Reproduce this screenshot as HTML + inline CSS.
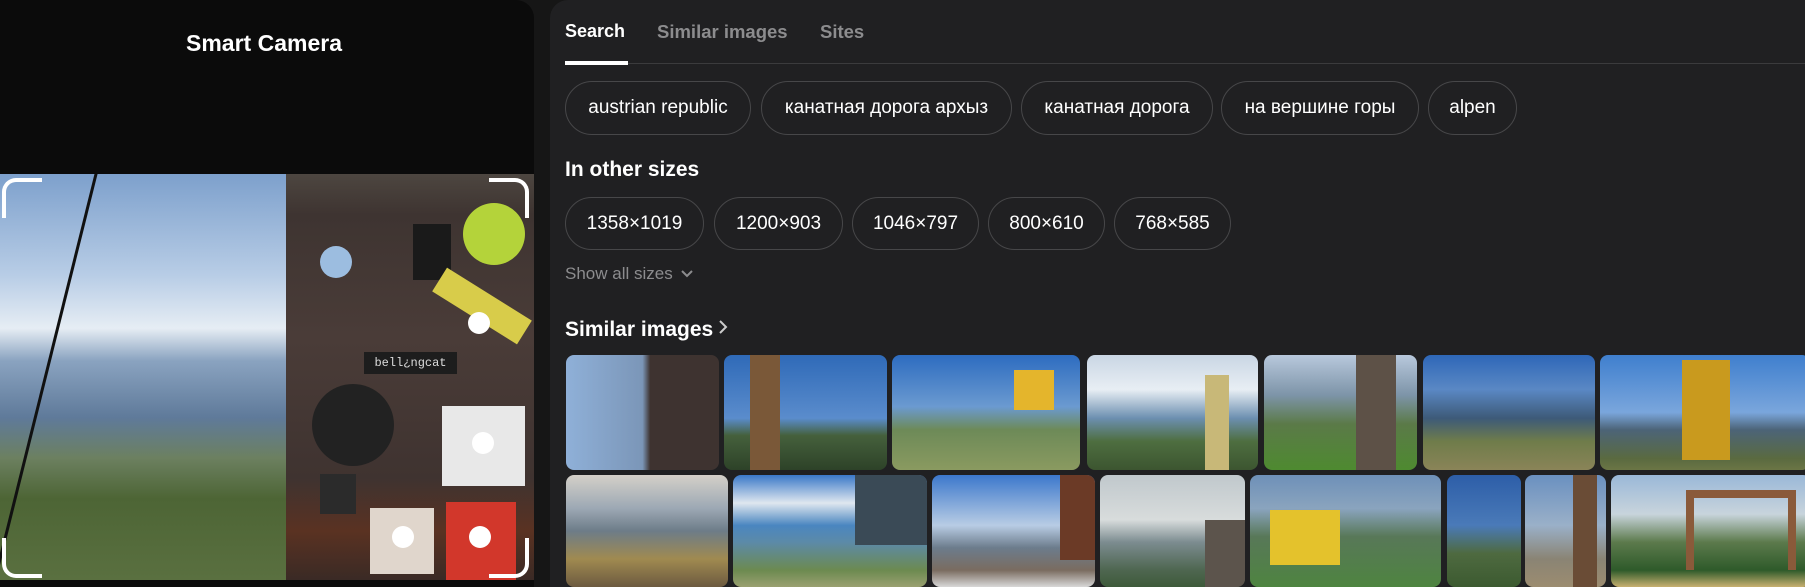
<!DOCTYPE html>
<html><head><meta charset="utf-8"><style>
*{margin:0;padding:0;box-sizing:border-box}
body{width:1805px;height:587px;background:#161616;font-family:"Liberation Sans","Noto Sans CJK SC",sans-serif;position:relative;overflow:hidden;color:#fff}
.a{position:absolute}
#left{left:0;top:0;width:534px;height:587px;background:#0b0b0b;border-radius:0 18px 0 0;overflow:hidden}
#right{left:550px;top:0;width:1255px;height:587px;background:#202022;border-radius:18px 0 0 0}
.chip{position:absolute;border:1px solid #474749;border-radius:28px;font-size:19px;color:#fff;display:flex;align-items:center;justify-content:center}
.br{position:absolute;width:40px;height:40px;border-color:#fff;border-style:solid}
.dot{position:absolute;width:22px;height:22px;border-radius:50%;background:#fff}
.im{position:absolute;border-radius:8px;overflow:hidden}
</style></head><body>
<div id="left" class="a">
<div class="a" style="left:0;top:30px;width:528px;text-align:center;font-size:23px;font-weight:bold">Smart Camera</div>
<div class="a" style="left:0;top:174px;width:534px;height:406px;overflow:hidden;background:linear-gradient(180deg,#7da0cc 0%,#b8cde6 25%,#e6edf4 38%,#8aa3c0 46%,#5f7a9a 60%,#6c8060 70%,#4d6535 80%,#5a7040 100%)">
 <div class="a" style="left:286px;top:0;width:248px;height:406px;background:linear-gradient(180deg,#4d4640 0%,#3e3431 10%,#4a3c38 40%,#3f3330 75%,#5a3222 88%,#3a2a25 100%)"></div>
 <div class="a" style="left:320px;top:300px;width:36px;height:40px;background:#2b2b2b"></div>
 <div class="a" style="left:463px;top:29px;width:62px;height:62px;border-radius:50%;background:#b4d33a"></div>
 <div class="a" style="left:413px;top:50px;width:38px;height:56px;background:#1a1a1a"></div>
 <div class="a" style="left:320px;top:72px;width:32px;height:32px;border-radius:50%;background:#9cbde0"></div>
 <div class="a" style="left:364px;top:178px;width:93px;height:22px;background:#1d1d1d;font-family:'Liberation Mono',monospace;font-size:12px;color:#ddd;text-align:center;line-height:22px">bell¿ngcat</div>
 <div class="a" style="left:312px;top:210px;width:82px;height:82px;border-radius:50%;background:#222"></div>
 <div class="a" style="left:442px;top:232px;width:83px;height:80px;background:#e8e8e8"></div>
 <div class="a" style="left:446px;top:328px;width:70px;height:78px;background:#d2372b"></div>
 <div class="a" style="left:370px;top:334px;width:64px;height:66px;background:#e0d6cc"></div>
 <div class="a" style="left:432px;top:118px;width:100px;height:28px;background:#d8cc4a;transform:rotate(32deg)"></div>
 <div class="a" style="left:97px;top:-10px;width:3px;height:430px;background:#111;transform:rotate(14deg);transform-origin:top"></div>
</div>
<div class="br" style="left:2px;top:178px;border-width:4px 0 0 4px;border-radius:14px 0 0 0"></div>
<div class="br" style="left:489px;top:178px;border-width:4px 4px 0 0;border-radius:0 14px 0 0"></div>
<div class="br" style="left:2px;top:538px;border-width:0 0 4px 4px;border-radius:0 0 0 14px"></div>
<div class="br" style="left:489px;top:538px;border-width:0 4px 4px 0;border-radius:0 0 14px 0"></div>
<div class="dot" style="left:468px;top:312px"></div>
<div class="dot" style="left:472px;top:432px"></div>
<div class="dot" style="left:392px;top:526px"></div>
<div class="dot" style="left:469px;top:526px"></div>
</div>
<div id="right" class="a"></div>
<div class="a" style="left:565px;top:21px;font-size:18px;font-weight:bold">Search</div>
<div class="a" style="left:657px;top:21px;font-size:18.5px;font-weight:bold;color:#8c8c8e">Similar images</div>
<div class="a" style="left:820px;top:21px;font-size:18.5px;font-weight:bold;color:#8c8c8e">Sites</div>
<div class="a" style="left:565px;top:63px;width:1240px;height:1px;background:#3b3b3d"></div>
<div class="a" style="left:565px;top:61px;width:63px;height:4px;background:#fff"></div>
<div class="chip" style="left:565px;top:81px;width:186px;height:54px">austrian republic</div>
<div class="chip" style="left:761px;top:81px;width:251px;height:54px">канатная дорога архыз</div>
<div class="chip" style="left:1021px;top:81px;width:192px;height:54px">канатная дорога</div>
<div class="chip" style="left:1221px;top:81px;width:198px;height:54px">на вершине горы</div>
<div class="chip" style="left:1428px;top:81px;width:89px;height:54px">alpen</div>
<div class="a" style="left:565px;top:158px;font-size:21px;font-weight:bold">In other sizes</div>
<div class="chip" style="left:565px;top:197px;width:139px;height:53px">1358×1019</div>
<div class="chip" style="left:714px;top:197px;width:129px;height:53px">1200×903</div>
<div class="chip" style="left:852px;top:197px;width:127px;height:53px">1046×797</div>
<div class="chip" style="left:988px;top:197px;width:117px;height:53px">800×610</div>
<div class="chip" style="left:1114px;top:197px;width:117px;height:53px">768×585</div>
<div class="a" style="left:565px;top:264px;font-size:17px;color:#8c8c8e">Show all sizes <svg width="14" height="10" viewBox="0 0 14 10" style="margin-left:3px"><path d="M2 2l5 5 5-5" stroke="#8c8c8e" stroke-width="2" fill="none"/></svg></div>
<div class="a" style="left:565px;top:318px;font-size:21px;font-weight:bold">Similar images<svg width="14" height="18" viewBox="0 0 14 18" style="margin-left:3px"><path d="M4 3l6 6-6 6" stroke="#ccc" stroke-width="2" fill="none"/></svg></div>
<!-- row1 -->
<div class="im" style="left:566px;top:355px;width:153px;height:115px;background:linear-gradient(90deg,#8fb0d8 0%,#7b96b8 50%,#3e3330 55%,#3e3330 100%)"></div>
<div class="im" style="left:724px;top:355px;width:163px;height:115px;background:linear-gradient(180deg,#2f6ab8 0%,#5a8ccc 55%,#45603c 70%,#2d4228 100%)"><div class="a" style="left:26px;top:0;width:30px;height:115px;background:#7a5838"></div></div>
<div class="im" style="left:892px;top:355px;width:188px;height:115px;background:linear-gradient(180deg,#2d6cc0 0%,#6b9ad0 45%,#6d8a58 65%,#8a9a60 100%)"><div class="a" style="left:122px;top:15px;width:40px;height:40px;background:#e4b52c"></div></div>
<div class="im" style="left:1087px;top:355px;width:171px;height:115px;background:linear-gradient(180deg,#c9d6e4 0%,#e8eef4 30%,#6c8fb0 55%,#4e6e40 75%,#3c5530 100%)"><div class="a" style="left:118px;top:20px;width:24px;height:95px;background:#c8b878"></div></div>
<div class="im" style="left:1264px;top:355px;width:153px;height:115px;background:linear-gradient(180deg,#b8c8dc 0%,#7d94a8 35%,#5b7a48 60%,#4e8a30 100%)"><div class="a" style="left:92px;top:0;width:40px;height:115px;background:#5d5147"></div></div>
<div class="im" style="left:1423px;top:355px;width:172px;height:115px;background:linear-gradient(180deg,#2e67b8 0%,#5a88c4 30%,#3d5a78 55%,#6f7c4a 75%,#8a8458 100%)"></div>
<div class="im" style="left:1600px;top:355px;width:210px;height:115px;background:linear-gradient(180deg,#3f7fce 0%,#7aa6dc 50%,#4c6478 65%,#5a6a40 90%,#6b7545 100%)"><div class="a" style="left:82px;top:5px;width:48px;height:100px;background:#c99a1e"></div></div>
<!-- row2 -->
<div class="im" style="left:566px;top:475px;width:162px;height:112px;background:linear-gradient(180deg,#d4d0c8 0%,#9ca8b4 30%,#6d7c88 50%,#a08a50 75%,#6c5a40 100%)"></div>
<div class="im" style="left:733px;top:475px;width:194px;height:112px;background:linear-gradient(180deg,#3a78c8 0%,#dfe7ef 25%,#4a86c0 45%,#5c8aa8 60%,#6c8a50 85%,#9aa070 100%)"><div class="a" style="left:122px;top:0;width:72px;height:70px;background:#3a4a56"></div></div>
<div class="im" style="left:932px;top:475px;width:163px;height:112px;background:linear-gradient(180deg,#3c78cc 0%,#b8cce4 45%,#6c7c8c 65%,#7a6c60 85%,#d8d8d8 100%)"><div class="a" style="left:128px;top:0;width:35px;height:85px;background:#6b3a26"></div></div>
<div class="im" style="left:1100px;top:475px;width:145px;height:112px;background:linear-gradient(180deg,#c0c8cc 0%,#d8dcdc 40%,#7c8c90 60%,#4e6650 85%,#3e5a3a 100%)"><div class="a" style="left:105px;top:45px;width:40px;height:67px;background:#5c544c"></div></div>
<div class="im" style="left:1250px;top:475px;width:191px;height:112px;background:linear-gradient(180deg,#6e90b8 0%,#8aa4be 30%,#587858 55%,#4e8440 100%)"><div class="a" style="left:20px;top:35px;width:70px;height:55px;background:#e4c22c"></div></div>
<div class="im" style="left:1447px;top:475px;width:74px;height:112px;background:linear-gradient(180deg,#2d5ea8 0%,#4a7ab8 45%,#4e6a40 70%,#3c5a30 100%)"></div>
<div class="im" style="left:1525px;top:475px;width:81px;height:112px;background:linear-gradient(180deg,#6a90c0 0%,#9ab0c8 45%,#8a8474 75%,#9c8c70 100%)"><div class="a" style="left:48px;top:0;width:24px;height:112px;background:#6a4c36"></div></div>
<div class="im" style="left:1611px;top:475px;width:200px;height:112px;background:linear-gradient(180deg,#9ab8d8 0%,#c8d4dc 35%,#5c7a4c 60%,#2e5a2a 85%,#c8b070 100%)"><div class="a" style="left:75px;top:15px;width:110px;height:80px;border:8px solid #8a5a3a;border-bottom:0;background:transparent"></div></div>
</body></html>
